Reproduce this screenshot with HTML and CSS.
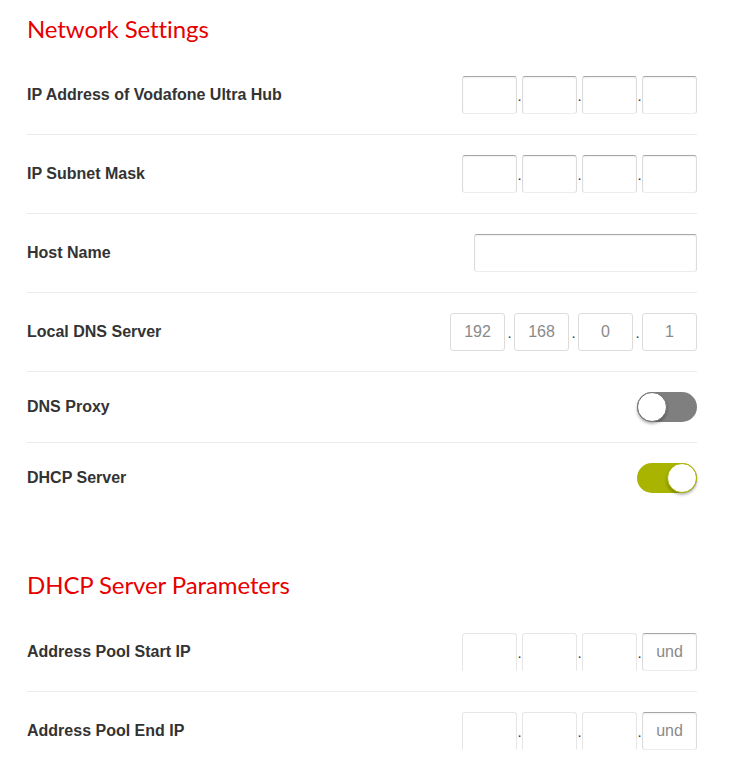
FILE: index.html
```html
<!DOCTYPE html>
<html lang="en">
<head>
<meta charset="utf-8">
<title>Network Settings</title>
<link rel="stylesheet" href="styles.css">
</head>
<body>
<main class="page">
  <h2 class="section-title">Network Settings</h2>
  <div class="row">
    <span class="label">IP Address of Vodafone Ultra Hub</span>
    <div class="ip">
      <input class="box" type="text" value=""><span class="dot">.</span>
      <input class="box" type="text" value=""><span class="dot">.</span>
      <input class="box" type="text" value=""><span class="dot">.</span>
      <input class="box" type="text" value="">
    </div>
  </div>
  <div class="row">
    <span class="label">IP Subnet Mask</span>
    <div class="ip">
      <input class="box" type="text" value=""><span class="dot">.</span>
      <input class="box" type="text" value=""><span class="dot">.</span>
      <input class="box" type="text" value=""><span class="dot">.</span>
      <input class="box" type="text" value="">
    </div>
  </div>
  <div class="row">
    <span class="label">Host Name</span>
    <input class="box box-wide" type="text" value="">
  </div>
  <div class="row">
    <span class="label">Local DNS Server</span>
    <div class="ip ip-filled">
      <input class="box" type="text" value="192"><span class="dot">.</span>
      <input class="box" type="text" value="168"><span class="dot">.</span>
      <input class="box" type="text" value="0"><span class="dot">.</span>
      <input class="box" type="text" value="1">
    </div>
  </div>
  <div class="row row-toggle">
    <span class="label">DNS Proxy</span>
    <span class="toggle toggle-off"><span class="knob"></span></span>
  </div>
  <div class="row row-toggle row-last">
    <span class="label">DHCP Server</span>
    <span class="toggle toggle-on"><span class="knob"></span></span>
  </div>

  <h2 class="section-title section-second">DHCP Server Parameters</h2>
  <div class="row">
    <span class="label">Address Pool Start IP</span>
    <div class="ip">
      <input class="box box-disabled" type="text" value="" disabled><span class="dot">.</span>
      <input class="box box-disabled" type="text" value="" disabled><span class="dot">.</span>
      <input class="box box-disabled" type="text" value="" disabled><span class="dot">.</span>
      <input class="box" type="text" placeholder="und">
    </div>
  </div>
  <div class="row row-last">
    <span class="label">Address Pool End IP</span>
    <div class="ip">
      <input class="box box-disabled" type="text" value="" disabled><span class="dot">.</span>
      <input class="box box-disabled" type="text" value="" disabled><span class="dot">.</span>
      <input class="box box-disabled" type="text" value="" disabled><span class="dot">.</span>
      <input class="box" type="text" placeholder="und">
    </div>
  </div>
</main>
</body>
</html>
```
FILE: styles.css
```css
html, body {
  margin: 0;
  padding: 0;
  background: #ffffff;
}

body {
  font-family: "Liberation Sans", Arial, sans-serif;
  color: #333333;
}

.page {
  width: 670px;
  padding: 13px 0 0 27px;
}

.section-title {
  margin: 0 0 12px 0;
  font-family: Lato, "Liberation Sans", sans-serif;
  font-weight: 400;
  font-size: 24px;
  line-height: 31px;
  color: #e60000;
  letter-spacing: -0.1px;
}

.section-second {
  margin-top: 56px;
  margin-bottom: 13px;
}

.row {
  display: flex;
  align-items: center;
  justify-content: space-between;
  padding: 20px 0;
  border-bottom: 1px solid #ebebeb;
}

.row-last {
  border-bottom: none;
}

.label {
  font-size: 16px;
  font-weight: 700;
  color: #333333;
}

.ip {
  display: flex;
  align-items: center;
}

.dot {
  width: 5px;
  font-size: 15px;
  line-height: 15px;
  text-align: center;
  color: #333333;
}

.ip-filled .dot {
  width: 9px;
}

.box {
  box-sizing: border-box;
  width: 55px;
  height: 38px;
  margin: 0;
  padding: 0;
  border: 1px solid #dcdcdc;
  border-top-color: #a6a6a6;
  border-bottom-color: #ececec;
  border-radius: 3px;
  background: #ffffff;
  box-shadow: inset 0 1px 2px rgba(0, 0, 0, 0.06);
  font-family: "Liberation Sans", Arial, sans-serif;
  font-size: 16px;
  color: #8a8a8a;
  text-align: center;
  outline: none;
}

.box::placeholder {
  color: #8a8a8a;
  opacity: 1;
}

.ip-filled .box {
  border-top-color: #dcdcdc;
  border-bottom-color: #dcdcdc;
  box-shadow: none;
}

.box-wide {
  width: 223px;
  height: 38px;
}

.box-disabled {
  border-color: #e6e6e6;
  border-bottom-color: transparent;
  border-radius: 3px 3px 0 0;
  box-shadow: none;
}

.toggle {
  box-sizing: border-box;
  display: flex;
  align-items: center;
  width: 60px;
  height: 30px;
  border-radius: 15px;
}

.toggle-off {
  background: #7f7f7f;
  justify-content: flex-start;
}

.toggle-on {
  background: #a8b400;
  justify-content: flex-end;
}

.knob {
  box-sizing: border-box;
  width: 30px;
  height: 30px;
  border-radius: 50%;
  background: #ffffff;
  box-shadow: 0 2px 3px rgba(0, 0, 0, 0.3);
}

.toggle-off .knob {
  border: 1px solid #6f6f6f;
}

.toggle-on .knob {
  border: 1px solid #a8b400;
}
```
